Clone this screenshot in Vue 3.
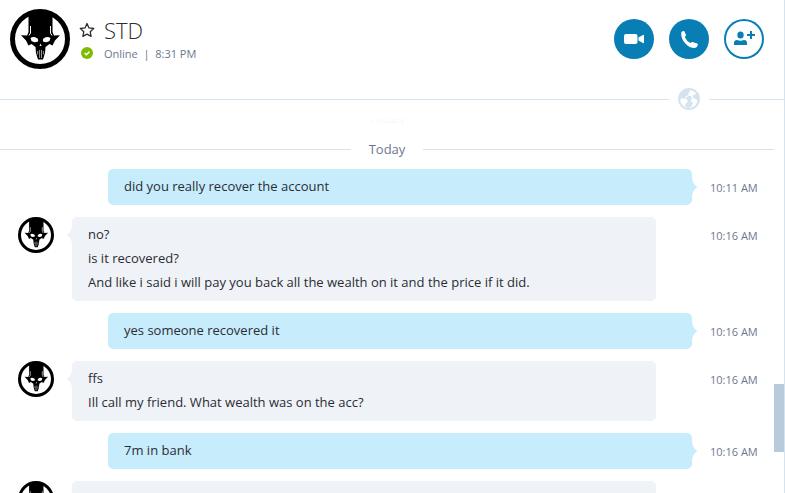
<template>
  <div class="chat-window">
    <svg class="symbols" width="0" height="0" aria-hidden="true">
      <symbol id="skull" viewBox="0 0 60 60">
        <circle cx="30" cy="30" r="27.5" fill="#fff" stroke="#000" stroke-width="5" />
        <path d="M18.500 4h24v19l1.500 3.500 6-.3-5 5.300-2.500 5-3-1.500-4 3-.5 6-2 6.500h-5l-2-6.500-.5-6-4-3-3 1.500-2.500-5-5-5.300 6 .3 1.500-3.500z" />
        <path d="M20.500 17v7l-1.500 2.500M40.500 17v7l1.500 2.500" fill="none" stroke="#fff" stroke-width="1" />
        <path d="M20.500 29q3-2 7 .5 1 1 .5 3-4 1.500-6.500-.5zM40.500 29q-3-2-7 .5-1 1-.5 3 4 1.500 6.500-.5z" fill="#fff" />
        <path d="M30.500 34.500l-1 2.500h2z" fill="#fff" />
        <path d="M27.700 42v3.500M29.600 41v8M31.500 41v8M33.400 42v3.500" fill="none" stroke="#fff" stroke-width=".6" />
      </symbol>
    </svg>

    <header class="chat-header">
      <svg class="avatar-large" role="img" aria-label="STD"><use href="#skull" /></svg>
      <div class="contact">
        <div class="contact-line name-line">
          <button class="star" aria-label="Favourite">
            <svg width="16" height="16" viewBox="0 0 16 16">
              <path d="M8 1.500l2 4.400 4.700.6-3.500 3.200.9 4.700L8 12.100l-4.100 2.300.9-4.700L1.300 6.500 6 5.900z" fill="none" stroke="#2b2c33" stroke-width="1.300" stroke-linejoin="round" />
            </svg>
          </button>
          <h1>{{ contact.name }}</h1>
        </div>
        <div class="contact-line">
          <svg class="status-icon" width="12" height="12" viewBox="0 0 12 12">
            <circle cx="6" cy="6" r="6" fill="#7fba00" />
            <path d="M3.600 6l1.700 1.700L8.500 4.600" fill="none" stroke="#fff" stroke-width="1.500" />
          </svg>
          <span class="status">{{ contact.status }}&nbsp; |&nbsp; {{ contact.time }}</span>
        </div>
      </div>
      <div class="actions">
        <button class="action" aria-label="Video call">
          <svg width="40" height="40" viewBox="0 0 40 40" fill="#fff">
            <rect x="10" y="15" width="13.500" height="10" rx="2" />
            <path d="M24.500 18.500l4.500-2.500q1-.5 1 .5v7q0 1-1 .5l-4.500-2.500z" />
          </svg>
        </button>
        <button class="action" aria-label="Call">
          <svg width="40" height="40" viewBox="0 0 40 40" fill="#fff">
            <path d="M12.300 13.200q1.200-1.400 2.900-1.200l1.800 4q.2.700-1.200 2 1.500 4 5.700 6.100 1.200-1.300 2-1l4.700 1.300q.8.400.6 1.600-.4 2.600-3 3-5 .2-9.500-4.600-4.800-5.400-4-11.200z" />
          </svg>
        </button>
        <button class="action outline" aria-label="Add people">
          <svg width="40" height="40" viewBox="0 0 40 40" fill="#087eb5">
            <ellipse cx="16.500" cy="16" rx="3.200" ry="3.500" />
            <path d="M10 26v-2q0-3 3-3 3.500 1.500 7 0 3 0 3 3v2z" />
            <path d="M26 12h2v3h3v2h-3v3h-2v-3h-3v-2h3z" />
          </svg>
        </button>
      </div>
    </header>

    <div class="header-rule">
      <svg width="22" height="22" viewBox="0 0 22 22">
        <circle cx="11" cy="11" r="10" fill="#fff" stroke="#d5e3ee" stroke-width="2" />
        <path d="M1 11Q1 4 7 1.500l4 .5 1 2-2 1 1 2-3 1-1 3-3-1-2 2zM8 10l2-2h3l1 2-1 3 2 2-2 4-3 1-3-2 1-3 2-1zM15 7l4-1 2 4-1 4-2-3-3-1z" fill="#d5e3ee" />
      </svg>
    </div>

    <main class="history">
      <div class="conversation">
        <div class="faded-day" aria-hidden="true">Today</div>
        <div class="day">Today</div>
        <div v-for="(message, index) in messages" :key="index" class="row" :class="{ mine: message.mine }">
          <svg v-if="!message.mine" class="avatar" aria-hidden="true"><use href="#skull" /></svg>
          <div class="bubble">
            <svg class="tail" width="5" height="18" viewBox="0 0 5 18">
              <path d="M0 0Q0 4 3 7L4.500 8.200Q5.500 9 4.500 9.800L3 11Q0 14 0 18z" fill="currentColor" />
            </svg>
            <p v-for="(line, i) in message.lines" :key="i">{{ line }}</p>
          </div>
          <time>{{ message.time }}</time>
        </div>
      </div>
      <div class="scrollbar"><div class="thumb"></div></div>
    </main>
  </div>
</template>

<script setup>
import { ref } from 'vue'

const contact = ref({ name: 'STD', status: 'Online', time: '8:31 PM' })

const messages = ref([
  { mine: true, time: '10:11 AM', lines: ['did you really recover the account'] },
  {
    mine: false,
    time: '10:16 AM',
    lines: [
      'no?',
      'is it recovered?',
      'And like i said i will pay you back all the wealth on it and the price if it did.'
    ]
  },
  { mine: true, time: '10:16 AM', lines: ['yes someone recovered it'] },
  { mine: false, time: '10:16 AM', lines: ['ffs', 'Ill call my friend. What wealth was on the acc?'] },
  { mine: true, time: '10:16 AM', lines: ['7m in bank'] },
  { mine: false, time: '', lines: [''] }
])
</script>

<style>
body {
  margin: 0;
  background: #fff;
}
</style>

<style scoped>
.chat-window {
  display: flex;
  flex-direction: column;
  height: 100vh;
  box-sizing: border-box;
  border-right: 1px solid #d5e3ee;
  overflow: hidden;
  color: #2b2c33;
  font-family: "Segoe UI", "Open Sans", sans-serif;
  font-size: 11px;
}

.symbols {
  position: absolute;
}

.chat-header {
  display: flex;
  flex-shrink: 0;
  align-items: flex-start;
  padding: 9px 20px 10px 10px;
}

.avatar-large {
  width: 60px;
  height: 60px;
  flex-shrink: 0;
}

.contact {
  flex: 1;
  padding: 7px 0 0 9px;
}

.contact-line {
  display: flex;
  align-items: center;
  gap: 9px;
  height: 18px;
}

.name-line {
  height: 28px;
}

h1 {
  margin: 0;
  font-family: "Segoe UI Light", "Open Sans", sans-serif;
  font-size: 22px;
  font-weight: 300;
  line-height: 28px;
}

button {
  padding: 0;
  border: 0;
  background: none;
  cursor: pointer;
}

button svg {
  display: block;
}

.status-icon {
  margin: 0 2px;
}

.status {
  color: #6e7790;
}

.actions {
  display: flex;
  gap: 15px;
  padding-top: 10px;
}

.action {
  width: 40px;
  height: 40px;
  border-radius: 50%;
  background: #087eb5;
}

.action.outline {
  background: #fff;
  box-shadow: inset 0 0 0 2px #087eb5;
}

.header-rule {
  display: flex;
  flex-shrink: 0;
  align-items: center;
  gap: 9px;
  height: 40px;
}

.header-rule::before,
.header-rule::after {
  content: "";
  height: 1px;
  background: #d5e3ee;
}

.header-rule::before {
  flex: 1;
}

.header-rule::after {
  width: 75px;
}

.history {
  display: flex;
  flex: 1;
  min-height: 0;
}

.conversation {
  flex: 1;
  overflow: hidden;
}

.faded-day {
  display: flex;
  align-items: flex-end;
  justify-content: center;
  height: 6px;
  overflow: hidden;
  color: #f7f8f9;
  font-size: 13px;
  line-height: 14px;
}

.day {
  display: flex;
  align-items: center;
  gap: 18px;
  height: 20px;
  margin: 14px 0 10px;
  color: #6e7790;
  font-size: 13px;
  line-height: 20px;
}

.day::before,
.day::after {
  content: "";
  flex: 1;
  height: 1px;
  background: #d5e3ee;
}

.row {
  display: flex;
  align-items: flex-start;
  gap: 18px;
  margin-bottom: 12px;
  padding: 0 17px 0 18px;
}

.avatar {
  width: 36px;
  height: 36px;
  flex-shrink: 0;
}

.bubble {
  position: relative;
  flex: 1;
  margin-right: 36px;
  padding: 5px 16px 7px;
  border-radius: 5px;
  background: #eff2f7;
}

.mine .bubble {
  margin: 0 0 0 90px;
  background: #c7ecfc;
}

.bubble p {
  min-height: 24px;
  margin: 0;
  font-size: 13px;
  line-height: 24px;
}

.tail {
  position: absolute;
  top: 9px;
  left: -5px;
  color: #eff2f7;
  transform: scaleX(-1);
}

.mine .tail {
  right: -5px;
  left: auto;
  color: #c7ecfc;
  transform: none;
}

time {
  width: 47px;
  padding-top: 2px;
  color: #6e7790;
  font-size: 11px;
  line-height: 34px;
  white-space: nowrap;
}

.scrollbar {
  display: flex;
  flex-direction: column;
  justify-content: flex-end;
  width: 10px;
  padding-bottom: 41px;
  box-sizing: border-box;
}

.thumb {
  height: 68px;
  background: #b7cbdc;
}
</style>
